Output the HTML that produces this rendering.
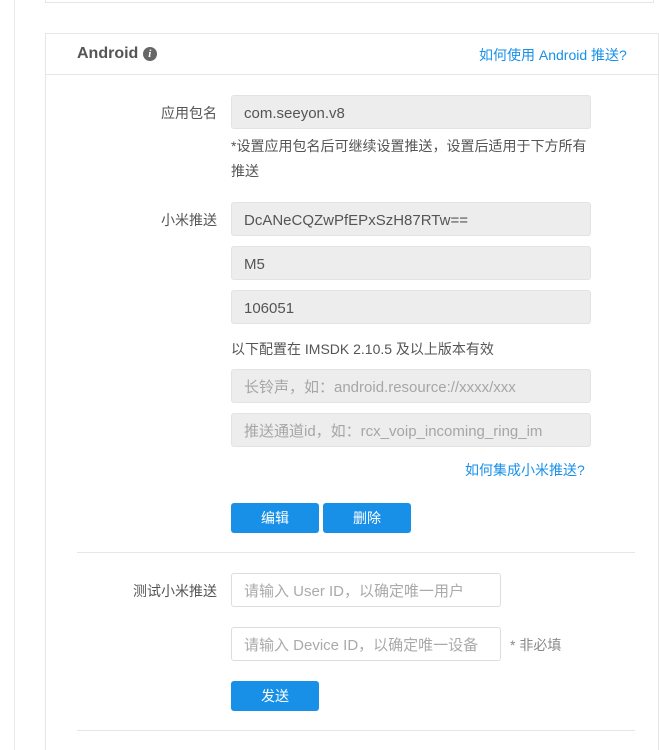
<!DOCTYPE html>
<html><head><meta charset="utf-8"><style>
*{margin:0;padding:0;box-sizing:border-box}
html,body{width:659px;height:750px;overflow:hidden}
body{background:#fff;position:relative;font-family:"Liberation Sans","Noto Sans CJK SC",sans-serif;font-size:14px;color:#555}
.a{position:absolute}
.inp{position:absolute;left:231px;width:360px;height:34px;background:#ededed;border:1px solid #e3e3e3;border-radius:3px;padding-left:12px;padding-top:2px;line-height:32px;font-size:15px;color:#555}
.ph{color:#a6a6a6}
.w{background:#fff;border-color:#ddd;width:270px;color:#aaa}
.btn{position:absolute;height:30px;width:88px;background:#1890e8;color:#fff;border-radius:3px;text-align:center;line-height:30px;font-size:14px}
.lbl{position:absolute;width:217px;left:0;text-align:right;font-size:14px;color:#555}
</style></head><body>
<div class="a" style="left:14px;top:0;width:1px;height:750px;background:#e8e8e8"></div>
<div class="a" style="left:45px;top:-5px;width:609px;height:8px;border:1px solid #e6e6e6"></div>
<div class="a" style="left:45px;top:33px;width:614px;height:730px;border:1px solid #e6e6e6"></div>
<div class="a" style="left:46px;top:74px;width:613px;height:1px;background:#e6e6e6"></div>
<div class="a" style="left:77px;top:45px;font-size:16px;font-weight:bold;color:#555">Android <span style="display:inline-block;width:14px;height:14px;border-radius:7px;background:#666;color:#fff;font-size:11px;line-height:14px;text-align:center;font-style:italic;font-family:'Liberation Serif',serif;vertical-align:1px">i</span></div>
<div class="a" style="left:479px;top:45px;font-size:14px;color:#1890e8">如何使用 Android 推送?</div>
<div class="lbl" style="top:103px">应用包名</div>
<div class="inp" style="top:95px">com.seeyon.v8</div>
<div class="a" style="left:231px;top:134px;width:362px;font-size:14px;line-height:25px;color:#555">*设置应用包名后可继续设置推送，设置后适用于下方所有<br>推送</div>
<div class="lbl" style="top:210px">小米推送</div>
<div class="inp" style="top:202px">DcANeCQZwPfEPxSzH87RTw==</div>
<div class="inp" style="top:246px">M5</div>
<div class="inp" style="top:290px">106051</div>
<div class="a" style="left:231px;top:339px;font-size:14px">以下配置在 IMSDK 2.10.5 及以上版本有效</div>
<div class="inp ph" style="top:369px">长铃声，如：android.resource://xxxx/xxx</div>
<div class="inp ph" style="top:413px">推送通道id，如：rcx_voip_incoming_ring_im</div>
<div class="a" style="left:465px;top:460px;color:#1890e8">如何集成小米推送?</div>
<div class="btn" style="left:231px;top:503px">编辑</div>
<div class="btn" style="left:323px;top:503px">删除</div>
<div class="a" style="left:77px;top:552px;width:558px;height:1px;background:#e6e6e6"></div>
<div class="lbl" style="top:581px">测试小米推送</div>
<div class="inp w" style="top:573px">请输入 User ID，以确定唯一用户</div>
<div class="inp w" style="top:627px">请输入 Device ID，以确定唯一设备</div>
<div class="a" style="left:510px;top:635px;color:#888">* 非必填</div>
<div class="btn" style="left:231px;top:681px">发送</div>
<div class="a" style="left:77px;top:730px;width:558px;height:1px;background:#e6e6e6"></div>
</body></html>
